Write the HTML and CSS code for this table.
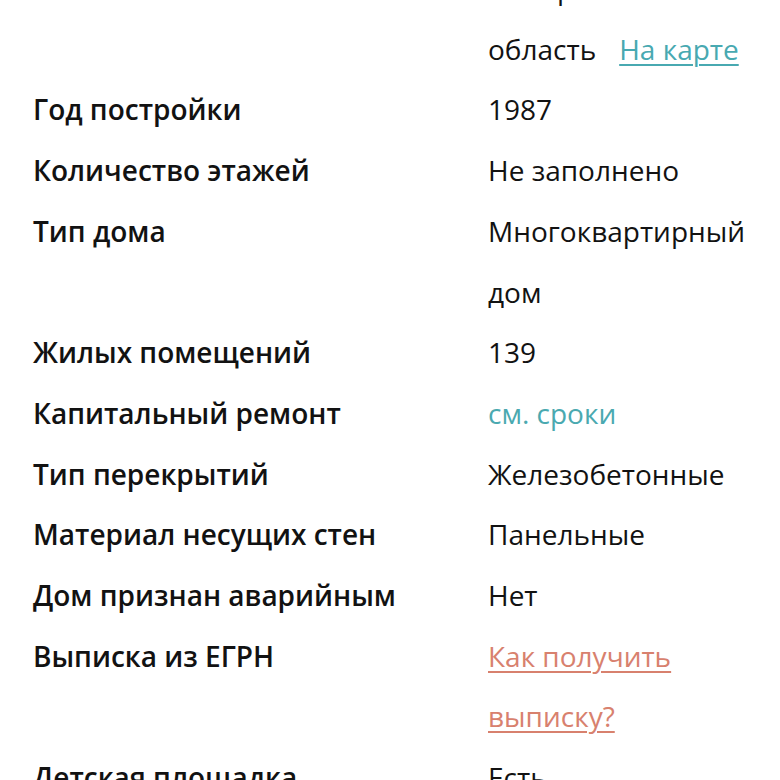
FILE: index.html
```html
<!DOCTYPE html>
<html lang="ru">
<head>
<meta charset="utf-8">
<link rel="stylesheet" href="styles.css">
</head>
<body>
<div class="props">
  <div class="label"></div>
  <div class="value">Кемеровская<br>область<a class="link-teal" href="#">На карте</a></div>

  <div class="label">Год постройки</div>
  <div class="value">1987</div>

  <div class="label">Количество этажей</div>
  <div class="value">Не заполнено</div>

  <div class="label">Тип дома</div>
  <div class="value">Многоквартирный дом</div>

  <div class="label">Жилых помещений</div>
  <div class="value">139</div>

  <div class="label">Капитальный ремонт</div>
  <div class="value"><span class="teal">см. сроки</span></div>

  <div class="label">Тип перекрытий</div>
  <div class="value">Железобетонные</div>

  <div class="label">Материал несущих стен</div>
  <div class="value">Панельные</div>

  <div class="label">Дом признан аварийным</div>
  <div class="value">Нет</div>

  <div class="label">Выписка из ЕГРН</div>
  <div class="value"><a class="link-red" href="#">Как получить выписку?</a></div>

  <div class="label">Детская площадка</div>
  <div class="value">Есть</div>
</div>
</body>
</html>
```
FILE: styles.css
```css
html, body {
  margin: 0;
  padding: 0;
  background: #ffffff;
}
body {
  font-family: "Open Sans", "Noto Sans", sans-serif;
  color: #121212;
  overflow: hidden;
}
.props {
  display: grid;
  grid-template-columns: 455px 280px;
  margin-top: -42px;
  padding-left: 33px;
  font-size: 28px;
  line-height: 60.7px;
}
.label {
  font-weight: 600;
}
.value {
  font-weight: 400;
}
.link-teal {
  color: #48a9b1;
  text-decoration: underline;
  text-decoration-thickness: 2px;
  text-underline-offset: 4px;
  margin-left: 23px;
}
.teal {
  color: #4aa9b0;
}
.link-red {
  color: #d8816e;
  text-decoration: underline;
  text-decoration-thickness: 2px;
  text-underline-offset: 4px;
}
```
